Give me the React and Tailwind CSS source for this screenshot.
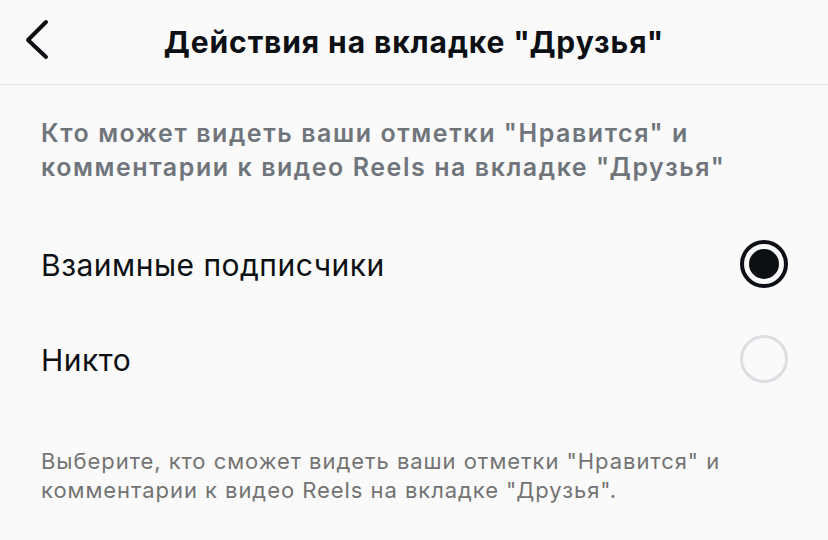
export default function App() {
  return (
    <div className="w-[828px] h-[540px] bg-[#fafafa] overflow-hidden" style={{ fontFamily: 'Inter, "Noto Sans", sans-serif' }}>
      <div className="relative h-[85px] border-b border-[#e3e3e3] flex items-center justify-center">
        <svg className="absolute left-[22px] top-[18px]" width="32" height="44" viewBox="0 0 32 44" fill="none">
          <path d="M24 4 L6 22 L24 39" stroke="#0c1014" strokeWidth="4" strokeLinecap="round" strokeLinejoin="round" />
        </svg>
        <div className="text-[30px] font-bold text-[#0c1014] tracking-[0.9px]">Действия на вкладке "Друзья"</div>
      </div>
      <div className="px-[41px] pt-[31px] text-[25px] leading-[34px] font-semibold text-[#70757c] tracking-[1.55px] whitespace-nowrap">
        Кто может видеть ваши отметки "Нравится" и<br />комментарии к видео Reels на вкладке "Друзья"
      </div>
      <div className="mt-[32px]">
        <div className="h-[95px] flex items-center justify-between pl-[41px] pr-[40px]">
          <span className="text-[30px] text-[#0c1014] mt-[4px] tracking-[0.5px]">Взаимные подписчики</span>
          <span className="w-[48px] h-[48px] rounded-full border-[4.5px] border-[#0c1014] flex items-center justify-center">
            <span className="w-[30px] h-[30px] rounded-full bg-[#0c1014]" />
          </span>
        </div>
        <div className="h-[95px] flex items-center justify-between pl-[41px] pr-[40px]">
          <span className="text-[30px] text-[#0c1014] mt-[4px] tracking-[0.5px]">Никто</span>
          <span className="w-[48px] h-[48px] rounded-full border-[3px] border-[#dbdee2]" />
        </div>
      </div>
      <div className="px-[41px] mt-[41px] text-[22px] leading-[29px] text-[#737373] tracking-[0.95px] whitespace-nowrap">
        Выберите, кто сможет видеть ваши отметки "Нравится" и<br />комментарии к видео Reels на вкладке "Друзья".
      </div>
    </div>
  );
}
